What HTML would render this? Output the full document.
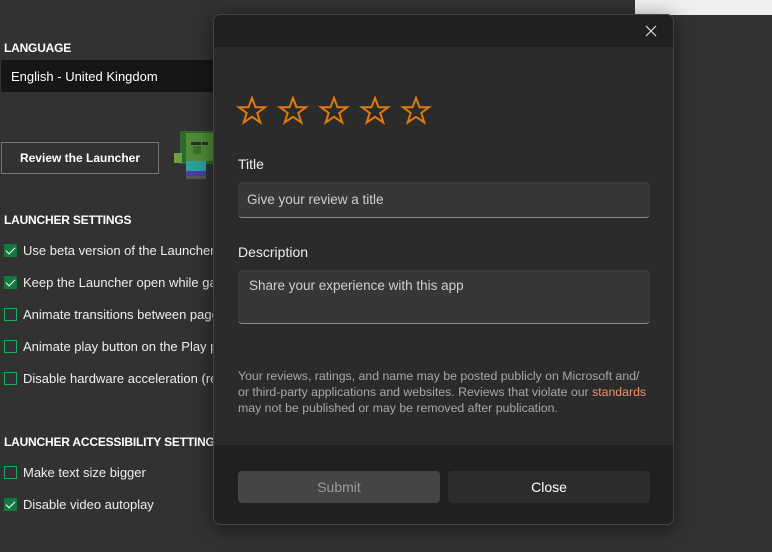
<!DOCTYPE html>
<html><head><style>
*{margin:0;padding:0;box-sizing:border-box}
body{width:772px;height:552px;overflow:hidden;background:#323232;font-family:"Liberation Sans",sans-serif;position:relative;color:#fff}
.a{position:absolute}
.h{font-weight:bold;font-size:12px;left:4px;letter-spacing:-0.2px}
.cb{position:absolute;left:4px;width:13px;height:13px;border:1px solid #1fa85a}
.cb.on{background:#13783c;border-color:#13783c}
.cb.on::after{content:"";position:absolute;left:3px;top:0px;width:4px;height:8px;border:solid #fff;border-width:0 1.5px 1.5px 0;transform:rotate(45deg)}
.lbl{position:absolute;left:23px;font-size:13px;color:#eee;white-space:nowrap}
.dlg{left:213px;top:14px;width:461px;height:511px;background:#2b2b2b;border:1px solid #444;border-radius:7px;overflow:hidden;box-shadow:0 4px 20px rgba(0,0,0,.5)}
.inp{position:absolute;left:24px;width:412px;background:#373737;border-radius:4px;border-bottom:1px solid #8a8a8a;color:#cfcfcf;font-size:13.5px}
.btn{position:absolute;top:455px;width:202px;height:32px;border-radius:4px;font-size:14px;text-align:center;line-height:32px}
</style></head><body>
<div class="a" style="left:635px;top:0;width:137px;height:15px;background:#efefef"></div>
<div class="a h" style="top:41px">LANGUAGE</div>
<div class="a" style="left:1px;top:60px;width:220px;height:32px;background:#161616;border-radius:2px;font-size:13px;padding:9px 10px">English - United Kingdom</div>
<div class="a" style="left:1px;top:142px;width:158px;height:32px;border:1px solid #777;font-weight:bold;font-size:12px;text-align:center;line-height:30px">Review the Launcher</div>
<svg class="a" style="left:174px;top:131px" width="40" height="50" viewBox="0 0 40 50" shape-rendering="crispEdges">
<rect x="6" y="0" width="34" height="33" fill="#2f6b28"/><rect x="12" y="2" width="28" height="28" fill="#4f8a3a"/>
<rect x="17" y="11" width="10" height="3" fill="#1e3a1a"/><rect x="28" y="11" width="6" height="3" fill="#1e3a1a"/>
<rect x="19" y="15" width="8" height="8" fill="#3d7030"/>
<rect x="0" y="22" width="8" height="10" fill="#6aa04a"/>
<rect x="12" y="30" width="20" height="10" fill="#2b9fa0"/>
<rect x="12" y="40" width="20" height="5" fill="#4a3ea0"/>
<rect x="12" y="45" width="20" height="3" fill="#555"/></svg>
<div class="a h" style="top:213px">LAUNCHER SETTINGS</div>
<div class="cb on" style="top:244px"></div><div class="lbl" style="top:243px">Use beta version of the Launcher</div>
<div class="cb on" style="top:276px"></div><div class="lbl" style="top:275px">Keep the Launcher open while games</div>
<div class="cb" style="top:308px"></div><div class="lbl" style="top:307px">Animate transitions between pages</div>
<div class="cb" style="top:340px"></div><div class="lbl" style="top:339px">Animate play button on the Play page</div>
<div class="cb" style="top:372px"></div><div class="lbl" style="top:371px">Disable hardware acceleration (requires</div>
<div class="a h" style="top:435px">LAUNCHER ACCESSIBILITY SETTINGS</div>
<div class="cb" style="top:466px"></div><div class="lbl" style="top:465px">Make text size bigger</div>
<div class="cb on" style="top:498px"></div><div class="lbl" style="top:497px">Disable video autoplay</div>

<div class="a dlg">
<div class="a" style="left:0;top:0;width:461px;height:32px;background:#202020"></div>
<svg class="a" style="left:431px;top:10px" width="12" height="12"><path d="M1 1L11 11M11 1L1 11" stroke="#ddd" stroke-width="1.2"/></svg>
<svg class="a" style="left:22px;top:81px" width="200" height="30" viewBox="0 0 200 30">
<g fill="none" stroke="#e07a10" stroke-width="2" stroke-linejoin="miter">
<path id="s" d="M16 2L19.5 11.3L29 11.3L21.3 17L24.3 26.5L16 20.8L7.7 26.5L10.7 17L3 11.3L12.5 11.3Z"/>
<use href="#s" x="41"/><use href="#s" x="82"/><use href="#s" x="123"/><use href="#s" x="164"/></g></svg>
<div class="a" style="left:24px;top:141px;font-size:14px;color:#eee">Title</div>
<div class="inp" style="top:167px;height:36px;padding:10px 9px">Give your review a title</div>
<div class="a" style="left:24px;top:229px;font-size:14px;color:#eee">Description</div>
<div class="inp" style="top:255px;height:54px;padding:8px 11px">Share your experience with this app</div>
<div class="a" style="left:24px;top:353px;font-size:12.3px;line-height:16px;color:#a8a8a8;white-space:nowrap">Your reviews, ratings, and name may be posted publicly on Microsoft and/<br>or third-party applications and websites. Reviews that violate our <span style="color:#f0926a">standards</span><br>may not be published or may be removed after publication.</div>
<div class="a" style="left:0;top:430px;width:461px;height:81px;background:#202020"></div>
<div class="btn" style="left:24px;background:#454545;color:#9a9a9a;top:456px">Submit</div>
<div class="btn" style="left:234px;background:#2d2d2d;color:#fff;top:456px">Close</div>
</div>
</body></html>
